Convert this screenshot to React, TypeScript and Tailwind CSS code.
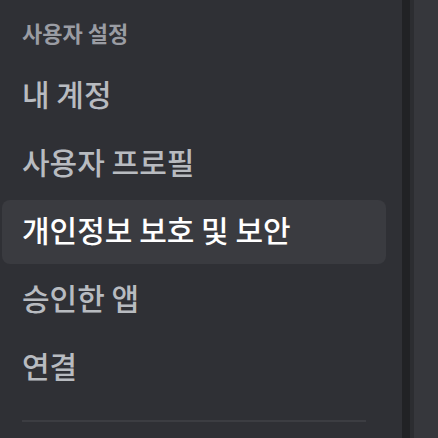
const ITEMS = ["내 계정", "사용자 프로필", "개인정보 보호 및 보안", "승인한 앱", "연결"];
const SELECTED = 2;

export default function App() {
  return (
    <div
      className="flex h-[438px] w-[438px] overflow-hidden bg-[#2f3035]"
      style={{ fontFamily: '"Noto Sans CJK KR", "Noto Sans", sans-serif' }}
    >
      {/* Settings sidebar */}
      <nav className="flex w-[402px] shrink-0 flex-col bg-[#2f3035] pl-[2px] pr-[16px] pt-[18px]">
        <h3 className="h-[28px] pl-[20px] text-[22px] font-bold leading-[28px] text-[#9a9ca3]">
          사용자 설정
        </h3>
        <ul className="mt-[18px] flex flex-col gap-[4px]">
          {ITEMS.map((label, i) => (
            <li
              key={label}
              className={
                i === SELECTED
                  ? "flex h-[64px] items-center rounded-[8px] bg-[#3a3b40] pb-[5px] pl-[20px] text-[30px] font-medium text-white"
                  : "flex h-[64px] items-center rounded-[8px] pb-[5px] pl-[20px] text-[30px] font-medium text-[#b8bbc0]"
              }
            >
              {label}
            </li>
          ))}
        </ul>
        <div className="ml-[20px] mt-[20px] h-[2px] w-[344px] bg-[#3c3d42]" />
      </nav>

      {/* Scrollbar / content edge */}
      <div className="w-[8px] shrink-0 bg-[#212225]" />
      <div className="w-[4px] shrink-0 bg-[#2c2d31]" />
      <div className="flex-1 bg-[#36373c]" />
    </div>
  );
}
